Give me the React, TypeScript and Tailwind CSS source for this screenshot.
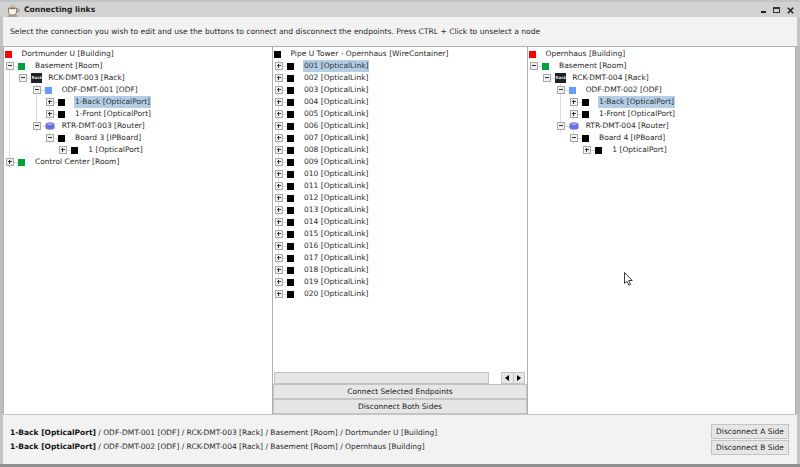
import React from "react";

type Kind = "red" | "green" | "blue" | "black" | "rack" | "router";
type Node = { level: number; exp?: "+" | "-"; icon: Kind; label: string; sel?: boolean; guides?: number[] };

const Expander = ({ sign }: { sign: "+" | "-" }) => (
  <span className="relative w-[8px] h-[8px] shrink-0 border border-[#a8a8a8] bg-[#f0f0f0]">
    <span className="absolute left-[1px] top-[2px] w-[4px] h-px bg-[#333]" />
    {sign === "+" && <span className="absolute left-[2px] top-[1px] w-px h-[4px] bg-[#333]" />}
  </span>
);

const Icon = ({ kind }: { kind: Kind }) => {
  if (kind === "rack")
    return (
      <span className="w-[11px] h-[10px] mr-[-4px] shrink-0 bg-[#1d2024] text-[#ddd] text-[4px] font-bold leading-[10px] text-center overflow-hidden">
        Rack
      </span>
    );
  if (kind === "router")
    return (
      <svg width="10" height="8" viewBox="0 0 10 8" className="shrink-0 mr-[-3px]">
        <ellipse cx="5" cy="2.5" rx="4.5" ry="2.3" fill="#8486ee" />
        <rect x="0.5" y="2.5" width="9" height="3" fill="#6e70e0" />
        <ellipse cx="5" cy="5.5" rx="4.5" ry="2.2" fill="#6e70e0" />
        <path d="M3 2.500h4" stroke="#c0c2ff" strokeWidth="0.8" />
      </svg>
    );
  const c =
    kind === "red"
      ? "bg-[#ff0000]"
      : kind === "green"
        ? "bg-[#00a03c]"
        : kind === "blue"
          ? "bg-[#659bff]"
          : "bg-black";
  return <span className={`w-[7px] h-[7px] shrink-0 ${c}`} />;
};

const Row = ({ n, origin }: { n: Node; origin: number }) => {
  const left = 13.33 * n.level;
  return (
    <div className="relative h-3 flex items-center whitespace-nowrap">
      {(n.guides ?? []).map((g) => (
        <span
          key={g}
          className="absolute top-0 h-3 w-px bg-[#dcdcdc]"
          style={{ left: origin + 3 + 13.33 * g }}
        />
      ))}
      {n.exp ? (
        <>
          <span className="shrink-0" style={{ width: origin + left }} />
          <span className="relative flex items-center shrink-0">
            <Expander sign={n.exp} />
            <span className="w-[4px] h-px bg-[#dcdcdc]" />
          </span>
          <Icon kind={n.icon} />
          <span className="shrink-0 w-[10px]" />
        </>
      ) : (
        <>
          <span className="w-[1px] shrink-0" />
          <Icon kind={n.icon} />
          <span className="shrink-0 w-[9.5px]" />
        </>
      )}
      <span
        className={
          n.sel
            ? "bg-[#b4cde6] px-px -mx-px h-3 leading-3 text-[#333]"
            : "h-3 leading-3"
        }
      >
        {n.label}
      </span>
    </div>
  );
};

const leftTree: Node[] = [
  { level: 0, icon: "red", label: "Dortmunder U [Building]" },
  { level: 0, exp: "-", icon: "green", label: "Basement [Room]", guides: [0] },
  { level: 1, exp: "-", icon: "rack", label: "RCK-DMT-003 [Rack]", guides: [0] },
  { level: 2, exp: "-", icon: "blue", label: "ODF-DMT-001 [ODF]", guides: [0, 2] },
  { level: 3, exp: "+", icon: "black", label: "1-Back [OpticalPort]", sel: true, guides: [0, 2, 3] },
  { level: 3, exp: "+", icon: "black", label: "1-Front [OpticalPort]", guides: [0, 2] },
  { level: 2, exp: "-", icon: "router", label: "RTR-DMT-003 [Router]", guides: [0, 2] },
  { level: 3, exp: "-", icon: "black", label: "Board 3 [IPBoard]", guides: [0, 3] },
  { level: 4, exp: "+", icon: "black", label: "1 [OpticalPort]", guides: [0] },
  { level: 0, exp: "+", icon: "green", label: "Control Center [Room]", guides: [0] },
];

const rightTree: Node[] = [
  { level: 0, icon: "red", label: "Opernhaus [Building]" },
  { level: 0, exp: "-", icon: "green", label: "Basement [Room]" },
  { level: 1, exp: "-", icon: "rack", label: "RCK-DMT-004 [Rack]" },
  { level: 2, exp: "-", icon: "blue", label: "ODF-DMT-002 [ODF]", guides: [2] },
  { level: 3, exp: "+", icon: "black", label: "1-Back [OpticalPort]", sel: true, guides: [2, 3] },
  { level: 3, exp: "+", icon: "black", label: "1-Front [OpticalPort]", guides: [2] },
  { level: 2, exp: "-", icon: "router", label: "RTR-DMT-004 [Router]", guides: [2] },
  { level: 3, exp: "-", icon: "black", label: "Board 4 [IPBoard]", guides: [3] },
  { level: 4, exp: "+", icon: "black", label: "1 [OpticalPort]" },
];

const links = [
  "001", "002", "003", "004", "005", "006", "007", "008", "009", "010",
  "011", "012", "013", "014", "015", "016", "017", "018", "019", "020",
];
const midTree: Node[] = [
  { level: 0, icon: "black", label: "Pipe U Tower - Opernhaus [WireContainer]" },
  ...links.map(
    (l, i): Node => ({
      level: 0,
      exp: "+",
      icon: "black",
      label: `${l} [OpticalLink]`,
      sel: i === 0,
      guides: i < 19 ? [0] : [],
    }),
  ),
];

const Tree = ({ nodes, origin }: { nodes: Node[]; origin: number }) => (
  <div className="pt-[1px]">
    {nodes.map((n, i) => (
      <Row key={i} n={n} origin={origin} />
    ))}
  </div>
);

const Btn = ({ children, className = "" }: { children: React.ReactNode; className?: string }) => (
  <div className={`flex items-center justify-center bg-[#e6e6e6] border border-[#c4c4c4] text-[#222] ${className}`}>
    {children}
  </div>
);

export default function App() {
  return (
    <div className="relative w-[800px] h-[467px] overflow-hidden flex flex-col bg-[#bdbdbd] text-[7.5px] text-[#2a2a2a] font-['DejaVu_Sans',sans-serif]">
      {/* title bar */}
      <div className="h-[17px] shrink-0 flex items-center bg-[#d2d2d2] border-t-2 border-[#c4c4c4] pt-[1px] pl-[7px] pr-[6px]">
        <svg width="13" height="13" viewBox="0 0 13 13" className="shrink-0">
          <path d="M1.500 4h8v4a3 3 0 0 1-3 3h-2a3 3 0 0 1-3-3z" fill="#f5f2ea" stroke="#77695a" strokeWidth="0.8" />
          <path d="M2.500 4.500h6" stroke="#9c6a2e" strokeWidth="1.200" />
          <path d="M9.500 5h1.300a1 1 0 0 1 0 2.800H9" fill="none" stroke="#77695a" strokeWidth="0.8" />
          <path d="M4 3c-.8-.8.8-1.200 0-2.500M6.500 3c-.8-.8.8-1.200 0-2.500" fill="none" stroke="#9a9a9a" strokeWidth="0.8" />
          <path d="M0.500 12h10" stroke="#8f8578" strokeWidth="1.200" />
        </svg>
        <span className="ml-[4px] font-bold text-[7.6px] text-[#1c1c1c]">Connecting links</span>
        <div className="ml-auto flex items-center text-[#222]">
          <span className="w-[5px] h-[2px] mt-[4px] bg-[#222]" />
          <span className="ml-[7px] w-[7px] h-[6px] border border-t-2 border-[#333]" />
          <svg width="7" height="7" viewBox="0 0 7 7" className="ml-[7px]">
            <path d="M.8.800l5.400 5.400M6.200.800l-5.400 5.400" stroke="#222" strokeWidth="1.600" />
          </svg>
        </div>
      </div>

      {/* instructions */}
      <div className="h-[29px] shrink-0 flex items-center pl-[7px] bg-[#f2f2f2] border-x-[3px] border-[#c4c4c4] text-[7.58px]">
        <span>
          Select the connection you wish to edit and use the buttons to connect and disconnect the endpoints. Press CTRL + Click to unselect a node
        </span>
      </div>

      {/* panels */}
      <div className="flex-1 min-h-0 flex ml-[3px] mr-[4px] border-t border-[#b0b0b0] bg-white">
        <div className="w-[270px] shrink-0 border-x border-[#b0b0b0]">
          <Tree nodes={leftTree} origin={2} />
        </div>
        <div className="w-[254px] shrink-0 flex flex-col">
          <div className="flex-1 min-h-0">
            <Tree nodes={midTree} origin={2} />
          </div>
          <div className="h-[13px] shrink-0 flex items-end pl-[1px] pr-[2px]">
            <div className="w-[215px] h-[12px] bg-[#e6e6e6] border border-[#c4c4c4]" />
            <div className="ml-auto flex h-[12px] w-[24px] bg-[#e6e6e6] border border-[#c4c4c4]">
              <span className="flex-1 flex items-center justify-center border-r border-[#c4c4c4]">
                <span className="w-0 h-0 border-y-[3px] border-y-transparent border-r-[4px] border-r-black" />
              </span>
              <span className="flex-1 flex items-center justify-center">
                <span className="w-0 h-0 border-y-[3px] border-y-transparent border-l-[4px] border-l-black" />
              </span>
            </div>
          </div>
          <Btn className="h-[15px] shrink-0">Connect Selected Endpoints</Btn>
          <Btn className="h-[15px] shrink-0">Disconnect Both Sides</Btn>
        </div>
        <div className="flex-1 border-x border-[#b0b0b0]">
          <Tree nodes={rightTree} origin={2} />
        </div>
      </div>

      {/* footer */}
      <div className="h-[50px] shrink-0 flex items-center justify-between bg-[#f2f2f2] border-l-[3px] border-r-[3px] border-t border-[#c4c4c4] pl-[7px] pr-[8px]">
        <div className="flex flex-col gap-[2px] leading-3 pt-[1px]">
          <div>
            <b className="text-[#111]">1-Back [OpticalPort]</b> / ODF-DMT-001 [ODF] / RCK-DMT-003 [Rack] / Basement [Room] / Dortmunder U [Building]
          </div>
          <div>
            <b className="text-[#111]">1-Back [OpticalPort]</b> / ODF-DMT-002 [ODF] / RCK-DMT-004 [Rack] / Basement [Room] / Opernhaus [Building]
          </div>
        </div>
        <div className="flex flex-col gap-px w-[78px]">
          <Btn className="h-[15px]">Disconnect A Side</Btn>
          <Btn className="h-[15px]">Disconnect B Side</Btn>
        </div>
      </div>
      <div className="h-[3px] shrink-0 bg-[#8f8f8f]" />

      {/* mouse pointer */}
      <svg width="10" height="14" viewBox="0 0 10 14" className="absolute left-[624px] top-[272px]">
        <path d="M0.500 0.500v11l2.500-2.300 1.800 4 1.800-.8-1.800-3.900h3.400z" fill="#fff" stroke="#222" strokeWidth="0.900" />
      </svg>
    </div>
  );
}
